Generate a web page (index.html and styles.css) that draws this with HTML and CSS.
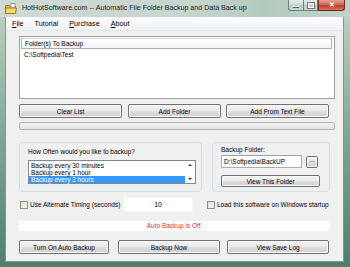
FILE: index.html
```html
<!DOCTYPE html>
<html lang="en">
<head>
  <meta charset="UTF-8" />
  <title>HotHotSoftware.com -- Automatic File Folder Backup and Data Back up</title>
  <link rel="stylesheet" href="styles.css">
</head>
<body>

  <div class="window">
    <div class="titlebar">
      <svg class="app-icon" width="12" height="12" viewBox="0 0 12 12">
        <path d="M0.5 2.5 H4.5 L5.5 3.5 H10.5 V10.5 H0.5 Z" fill="#e8b838" stroke="#a87818" stroke-width="1"/>
        <path d="M0.5 5 H11.5 L10.5 10.5 H0.5 Z" fill="#f8d868" stroke="#a87818" stroke-width="1"/>
        <rect x="6" y="0.5" width="4" height="4" fill="#fff" stroke="#888" stroke-width="0.8"/>
      </svg>
      <span class="title">HotHotSoftware.com -- Automatic File Folder Backup and Data Back up</span>
      <div class="controls">
        <span class="ctl min"><i></i></span>
        <span class="ctl max"><i></i></span>
        <span class="ctl close">✕</span>
      </div>
    </div>

    <div class="client">
      <div class="menubar">
        <span class="menu"><u>F</u>ile</span>
        <span class="menu">Tutorial</span>
        <span class="menu"><u>P</u>urchase</span>
        <span class="menu"><u>A</u>bout</span>
      </div>

      <div class="content">
        <div class="folder-list">
          <div class="list-header"><span>Folder(s) To Backup</span></div>
          <div class="list-row">C:\Softpedia\Test</div>
        </div>

        <div class="button-row top">
          <button class="btn w-clear">Clear List</button>
          <button class="btn w-add">Add Folder</button>
          <button class="btn w-text">Add From Text File</button>
        </div>

        <div class="progress"></div>

        <div class="groups">
          <div class="group often">
            <p class="group-label">How Often would you like to backup?</p>
            <div class="listbox">
              <ul class="items">
                <li>Backup every 30 minutes</li>
                <li>Backup every 1 hour</li>
                <li class="selected">Backup every 2 hours</li>
              </ul>
              <div class="scroll">
                <span class="arrow up"></span>
                <span class="arrow down"></span>
              </div>
            </div>
          </div>

          <div class="group folder">
            <p class="group-label">Backup Folder:</p>
            <div class="path-row">
              <div class="textbox">D:\Softpedia\BackUP</div>
              <button class="btn browse">...</button>
            </div>
            <button class="btn view">View This Folder</button>
          </div>
        </div>

        <div class="options">
          <label class="check timing"><span class="box"></span>Use Alternate Timing (seconds)</label>
          <div class="number">10</div>
          <label class="check startup"><span class="box"></span>Load this software on Windows startup</label>
        </div>

        <div class="status">Auto Backup is Off.</div>

        <div class="button-row bottom">
          <button class="btn w-turn">Turn On Auto Backup</button>
          <button class="btn w-now">Backup Now</button>
          <button class="btn w-log">View Save Log</button>
        </div>
      </div>
    </div>
  </div>

</body>
</html>
```

FILE: styles.css
```css
* {
  margin: 0;
  padding: 0;
  box-sizing: border-box;
}

body {
  font-family: 'Liberation Sans', Arial, sans-serif;
  font-size: 6.5px;
  color: #000;
  background: #fff;
}

.window {
  width: 350px;
  height: 267px;
  display: flex;
  flex-direction: column;
  background: linear-gradient(to bottom, #c9d7d0 0%, #b4cabf 10%, #7fa898 50%, #4f7d6c 100%);
  overflow: hidden;
}

.titlebar {
  height: 17px;
  display: flex;
  align-items: flex-start;
  position: relative;
  background: linear-gradient(to right, #cfdad5 0%, #c7d5ce 55%, #b3cbbf 75%, #c0d2c9 100%);
}

.app-icon {
  margin: 3px 0 0 5px;
  flex-shrink: 0;
}

.title {
  margin: 4px 0 0 5px;
  font-size: 7.1px;
  color: #1a1a1a;
  white-space: nowrap;
}

.controls {
  position: absolute;
  top: 0;
  right: 5px;
  display: flex;
}

.ctl {
  height: 11px;
  width: 15px;
  border: 1px solid #6a7f78;
  border-top: none;
  background: linear-gradient(to bottom, #e4ece9 0%, #cdd9d4 50%, #b8c9c2 51%, #c9d8d2 100%);
  display: flex;
  align-items: center;
  justify-content: center;
}

.ctl.min {
  border-radius: 0 0 0 3px;
  border-right: none;
}

.ctl.min i {
  width: 6px;
  height: 2px;
  margin-top: 3px;
  background: #fff;
  border: 1px solid #4a5a55;
  border-width: 0 0 1px 0;
}

.ctl.max i {
  width: 6px;
  height: 5px;
  border: 1px solid #fff;
  outline: 1px solid #6a7a75;
}

.ctl.close {
  width: 27px;
  border-color: #6e2a22;
  border-radius: 0 0 3px 0;
  background: linear-gradient(to bottom, #e5a090 0%, #d06a55 45%, #c0422a 55%, #d8725a 100%);
  color: #fff;
  font-size: 7px;
  font-weight: bold;
}

.client {
  flex: 1;
  margin: 0 7px 6px 6px;
  background: #f0f0f0;
  display: flex;
  flex-direction: column;
  box-shadow: 0 0 0 1px #7d9990;
}

.menubar {
  height: 14px;
  display: flex;
  align-items: center;
  padding-left: 3px;
  background: linear-gradient(to bottom, #fbfcfd, #f0f2f5);
  border-bottom: 1px solid #e4e7ea;
  font-size: 7.2px;
}

.menu {
  padding: 0 4px 0 3px;
  margin-right: 4px;
}

.menu u {
  text-decoration: underline;
}

.content {
  padding: 5px 8px 0 13px;
  display: flex;
  flex-direction: column;
}

.folder-list {
  height: 63px;
  background: #fff;
  border: 1px solid #a0a0a0;
  padding: 1px 2px 0 1px;
}

.list-header {
  height: 11px;
  border: 1px solid #b0b0b0;
  border-top-color: #d8d8d8;
  background: linear-gradient(to bottom, #ffffff, #f2f3f5);
  display: flex;
  align-items: center;
  padding-left: 3px;
}

.list-row {
  padding: 2px 0 0 3px;
  line-height: 8px;
}

.button-row {
  display: flex;
}

.button-row.top {
  margin-top: 5px;
}

.button-row.bottom {
  margin-top: 9px;
}

.btn {
  height: 14px;
  font-family: inherit;
  font-size: 6.5px;
  color: #000;
  border: 1px solid #707070;
  border-radius: 2px;
  background: linear-gradient(to bottom, #f2f2f2 0%, #ebebeb 48%, #dddddd 52%, #cfcfcf 100%);
  box-shadow: inset 0 0 0 1px #fbfbfb;
}

.w-clear { width: 103px; }
.w-add { width: 93px; margin-left: 6px; }
.w-text { width: 103px; margin-left: 5px; }

.w-turn { width: 90px; }
.w-now { width: 102px; margin-left: 9px; }
.w-log { width: 102px; margin-left: 7px; }

.progress {
  margin-top: 4px;
  height: 8px;
  border: 1px solid #b2b2b2;
  border-radius: 2px;
  background: linear-gradient(to bottom, #f4f4f4, #e2e2e2);
}

.groups {
  margin-top: 12px;
  height: 50px;
  display: flex;
}

.group {
  border: 1px solid #d5dfe5;
  border-radius: 4px;
  padding: 5px 0 0 8px;
}

.group.often {
  width: 183px;
}

.group.folder {
  width: 118px;
  margin-left: 10px;
  padding: 3px 0 0 8px;
}

.group-label {
  line-height: 8px;
}

.listbox {
  margin-top: 4px;
  width: 168px;
  height: 24px;
  border: 1px solid #828790;
  background: #fff;
  display: flex;
}

.items {
  list-style: none;
  flex: 1;
  padding-top: 1px;
}

.items li {
  line-height: 7px;
  padding-left: 2px;
}

.items li.selected {
  background: #3399ff;
  color: #fff;
}

.scroll {
  width: 10px;
  display: flex;
  flex-direction: column;
  justify-content: space-between;
  align-items: center;
  padding: 3px 0;
}

.arrow {
  width: 0;
  height: 0;
  border-left: 2px solid transparent;
  border-right: 2px solid transparent;
}

.arrow.up {
  border-bottom: 2px solid #333;
}

.arrow.down {
  border-top: 2px solid #333;
}

.path-row {
  display: flex;
  align-items: center;
  margin-top: 1px;
}

.textbox {
  width: 81px;
  height: 13px;
  border: 1px solid #abadb3;
  border-top-color: #9aa0a8;
  background: #fff;
  padding-left: 2px;
  line-height: 11px;
}

.btn.browse {
  width: 12px;
  height: 12px;
  margin-left: 4px;
  line-height: 6px;
  padding-bottom: 3px;
}

.btn.view {
  width: 99px;
  height: 12px;
  margin-top: 7px;
}

.options {
  margin-top: 5px;
  height: 15px;
  display: flex;
  align-items: center;
}

.check {
  display: flex;
  align-items: center;
}

.box {
  width: 8px;
  height: 8px;
  border: 1px solid #8e8f8f;
  background: linear-gradient(135deg, #d8d8d8, #fdfdfd);
  margin-right: 2px;
}

.check.timing {
  margin-left: 1px;
  width: 103px;
}

.number {
  width: 70px;
  height: 15px;
  background: #fff;
  border: 1px solid #f4f4f4;
  text-align: center;
  line-height: 13px;
  font-size: 6.8px;
}

.check.startup {
  margin-left: 14px;
}

.status {
  margin-top: 9px;
  width: 311px;
  height: 10px;
  background: #fff;
  color: #e8312f;
  text-align: center;
  line-height: 10px;
}
```
